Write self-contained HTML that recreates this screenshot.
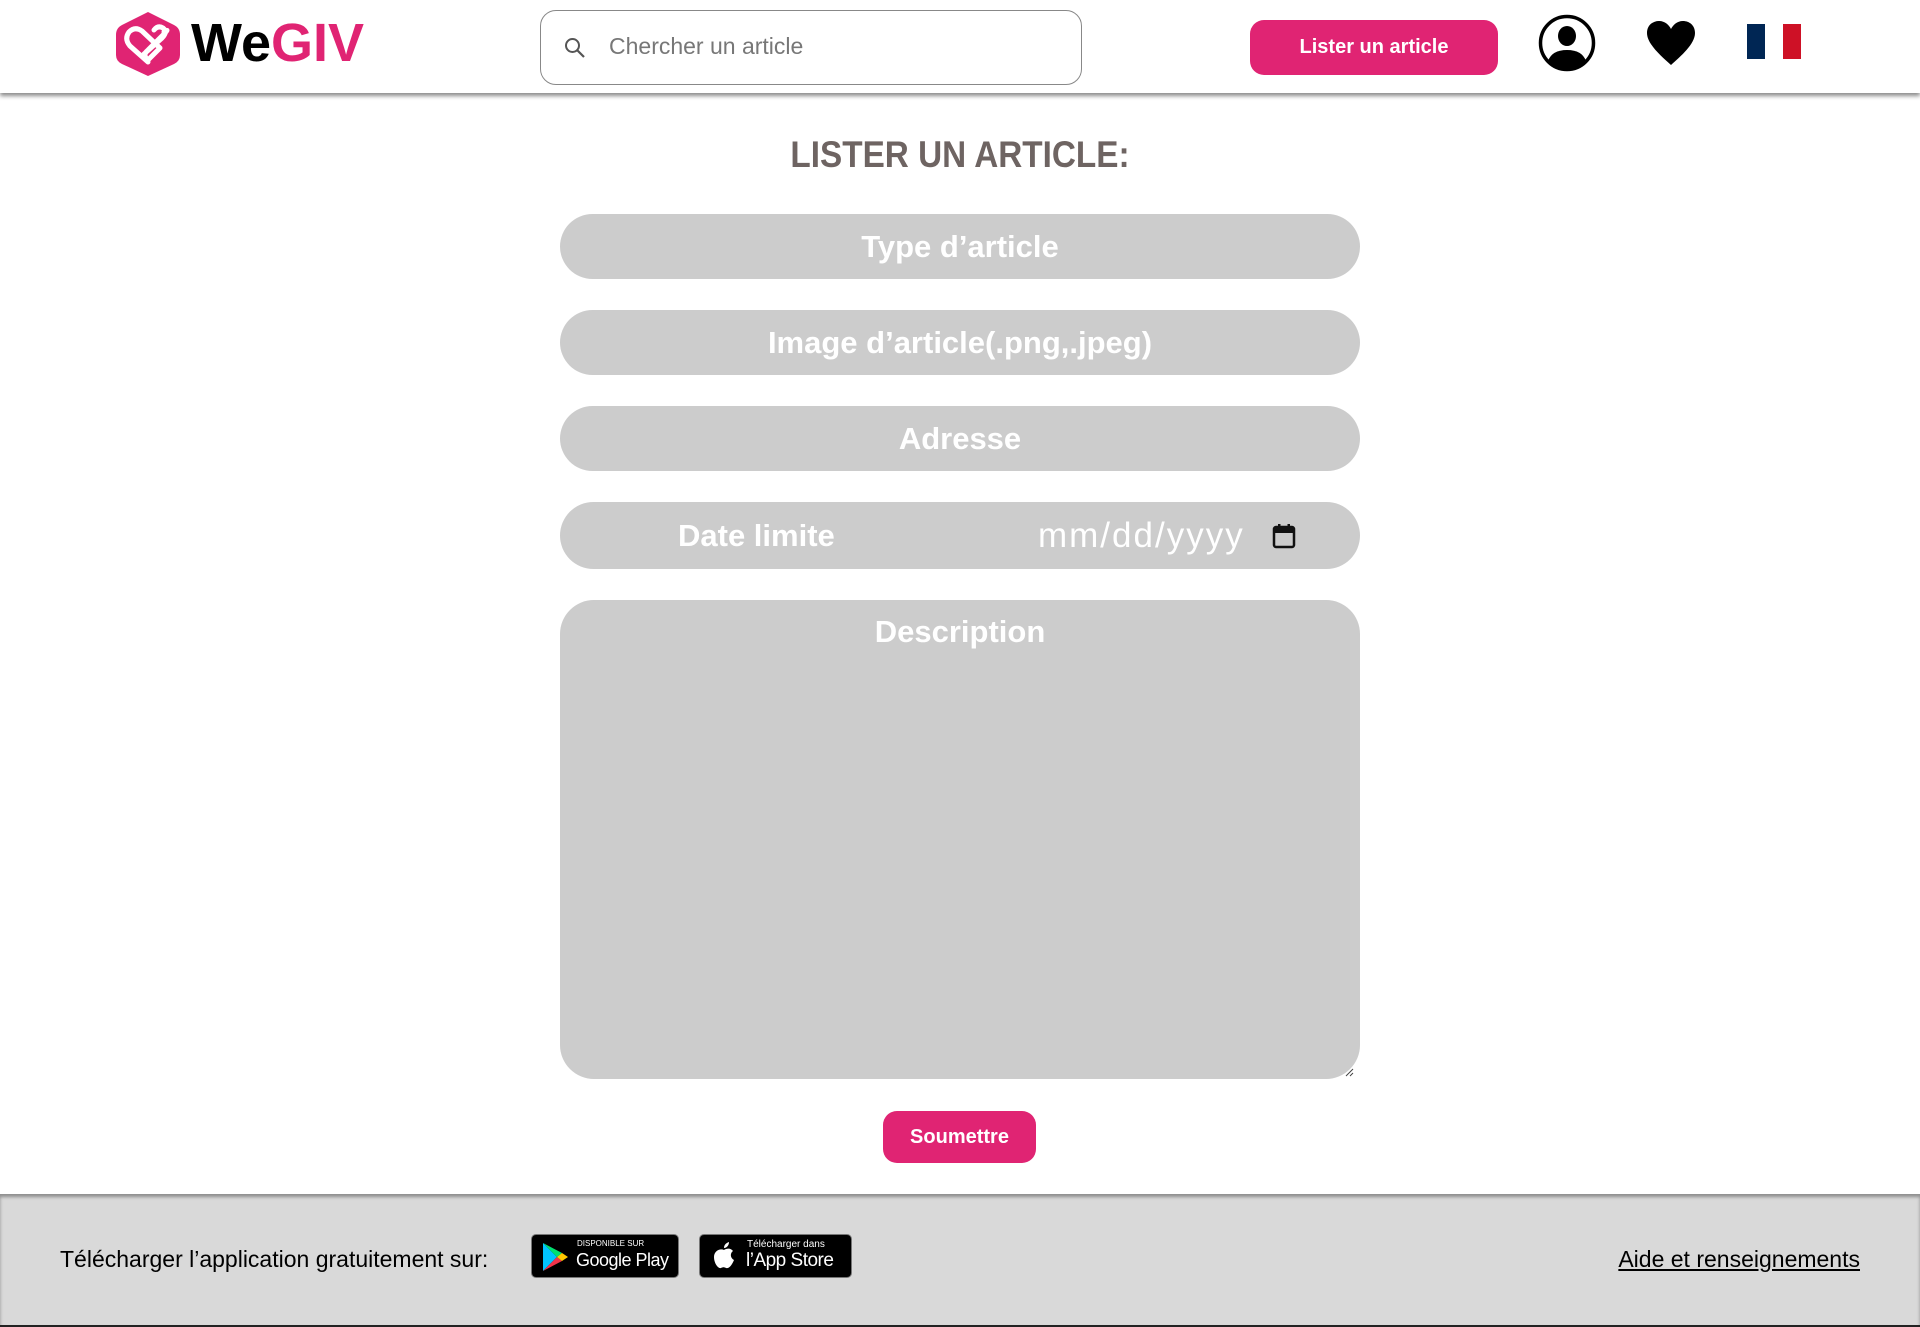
<!DOCTYPE html>
<html><head><meta charset="utf-8"><style>
*{box-sizing:border-box;margin:0;padding:0}
body{width:1920px;height:1327px;background:#fff;font-family:"Liberation Sans",sans-serif;position:relative;overflow:hidden}
.hdr{position:absolute;left:0;top:0;width:1920px;height:93px;background:#fff;box-shadow:0 3px 4px rgba(0,0,0,.45);z-index:2}
.abs{position:absolute;white-space:nowrap}
.logo-t{left:191px;top:12px;font-size:54px;font-weight:bold;letter-spacing:0px}
.search{left:540px;top:10px;width:542px;height:75px;border:1.5px solid #888;border-radius:16px}
.search span{position:absolute;left:68px;top:22px;font-size:23px;color:#777}
.btn{background:#e02473;color:#fff;border-radius:14px;text-align:center;font-weight:bold}
.field{position:absolute;left:560px;width:800px;background:#cccccc;border-radius:34px;color:#fff;font-size:31px;font-weight:bold;text-align:center}
.footer{position:absolute;left:0;top:1194px;width:1920px;height:133px;background:#d9d9d9;box-shadow:inset 0 3px 3px rgba(0,0,0,.35);border-bottom:2px solid #222}
.badge{position:absolute;top:40px;height:44px;background:#000;border-radius:5px;border:1px solid #777;color:#fff}
</style></head><body>
<div class="hdr">
 <svg class="abs" style="left:114px;top:10px" width="68" height="68" viewBox="0 0 68 68">
  <path d="M34 2 L60 15 Q66 18 66 25 L66 45 Q66 51 60 54 L34 66 L8 54 Q2 51 2 45 L2 25 Q2 18 8 15 Z" fill="#e02473"/>
  <path d="M34 52 L16 36 Q10 29 15 22 Q21 16 28 21 L46 38 M46 38 L34 50 Q28 45 34 40 L50 24 Q56 18 50 22" fill="none" stroke="#fff" stroke-width="5" stroke-linejoin="round" stroke-linecap="round"/>
  <path d="M30 44 L48 28 Q54 22 49 18 Q44 15 40 20" fill="none" stroke="#fff" stroke-width="5" stroke-linecap="round"/>
 </svg>
 <div class="abs logo-t"><span style="color:#000">We</span><span style="color:#e02473">GIV</span></div>
 <div class="abs search">
  <svg class="abs" style="left:22px;top:25px" width="24" height="24" viewBox="0 0 24 24"><circle cx="9.5" cy="9.5" r="6.5" fill="none" stroke="#555" stroke-width="2"/><path d="M14.5 14.5 L21 21" stroke="#555" stroke-width="2.2"/></svg>
  <span>Chercher un article</span>
 </div>
 <div class="abs btn" style="left:1250px;top:20px;width:248px;height:55px;line-height:55px;font-size:20px">Lister un article</div>
 <svg class="abs" style="left:1538px;top:14px" width="58" height="58" viewBox="0 0 58 58"><circle cx="29" cy="29" r="26.5" fill="none" stroke="#000" stroke-width="3.5"/><ellipse cx="29" cy="22" rx="9" ry="10" fill="#000"/><path d="M10 47 Q14 36 29 36 Q44 36 48 47 Q40 56 29 56 Q18 56 10 47Z" fill="#000"/></svg>
 <svg class="abs" style="left:1646px;top:20px" width="50" height="46" viewBox="0 0 50 46"><path d="M25 45 C15 36 1 24 1 13 C1 5 7 1 13 1 C19 1 23 5 25 9 C27 5 31 1 37 1 C43 1 49 5 49 13 C49 24 35 36 25 45Z" fill="#000"/></svg>
 <div class="abs" style="left:1747px;top:24px;width:18px;height:35px;background:#002654"></div>
 <div class="abs" style="left:1783px;top:24px;width:18px;height:35px;background:#ce1126"></div>
</div>

<div class="abs" style="left:0;width:1920px;top:134px;text-align:center;font-size:37px;color:#6e6462;font-weight:bold;transform:scaleX(0.9)">LISTER UN ARTICLE:</div>

<div class="field" style="top:214px;height:65px;line-height:65px">Type d’article</div>
<div class="field" style="top:310px;height:65px;line-height:65px">Image d’article(.png,.jpeg)</div>
<div class="field" style="top:406px;height:65px;line-height:65px">Adresse</div>
<div class="field" style="top:502px;height:67px;line-height:67px;text-align:left">
 <span class="abs" style="left:118px">Date limite</span>
 <span class="abs" style="left:478px;font-weight:normal;font-size:35px;letter-spacing:2px">mm/dd/yyyy</span>
 <svg class="abs" style="left:712px;top:21px" width="24" height="26" viewBox="0 0 24 26"><rect x="2" y="4" width="20" height="20" rx="2" fill="none" stroke="#111" stroke-width="2.5"/><rect x="2" y="4" width="20" height="6" fill="#111"/><rect x="6" y="1" width="2.5" height="5" fill="#111"/><rect x="15.5" y="1" width="2.5" height="5" fill="#111"/></svg>
</div>
<div class="field" style="top:600px;height:479px;padding-top:14px">Description
 <svg class="abs" style="right:6px;bottom:2px" width="10" height="10"><path d="M9 2 L2 9 M9 6 L6 9" stroke="#444" stroke-width="1"/></svg>
</div>

<div class="abs btn" style="left:883px;top:1111px;width:153px;height:52px;line-height:52px;font-size:20px">Soumettre</div>

<div class="footer">
 <div class="abs" style="left:60px;top:52px;font-size:23px;color:#000">Télécharger l’application gratuitement sur:</div>
 <div class="badge" style="left:531px;width:148px">
  <svg class="abs" style="left:10px;top:7px" width="26" height="30" viewBox="0 0 26 30"><path d="M1 1 L15 15 L1 29Z" fill="#00c4ff"/><path d="M1 1 L20 11 L15 15Z" fill="#00e070"/><path d="M1 29 L20 19 L15 15Z" fill="#f0334a"/><path d="M20 11 L26 15 L20 19 L15 15Z" fill="#ffc800"/></svg>
  <div class="abs" style="left:45px;top:4px;font-size:8px">DISPONIBLE SUR</div>
  <div class="abs" style="left:44px;top:15px;font-size:18px;letter-spacing:-0.5px">Google Play</div>
 </div>
 <div class="badge" style="left:699px;width:153px">
  <svg class="abs" style="left:12px;top:7px" width="24" height="28" viewBox="0 0 24 28"><path d="M12 8 C15 6 19 6 21 9 C18 11 18 16 22 18 C20 23 17 27 14 26 C12 25 11 25 9 26 C6 27 2 21 2 15 C2 9 8 6 12 8Z M12 6 C12 3 14 1 17 0 C17 3 15 6 12 6Z" fill="#fff"/></svg>
  <div class="abs" style="left:47px;top:4px;font-size:10px">Télécharger dans</div>
  <div class="abs" style="left:46px;top:15px;font-size:19px;letter-spacing:-0.5px">l’App Store</div>
 </div>
 <div class="abs" style="right:60px;top:52px;font-size:23px;color:#000;text-decoration:underline">Aide et renseignements</div>
</div>
</body></html>
